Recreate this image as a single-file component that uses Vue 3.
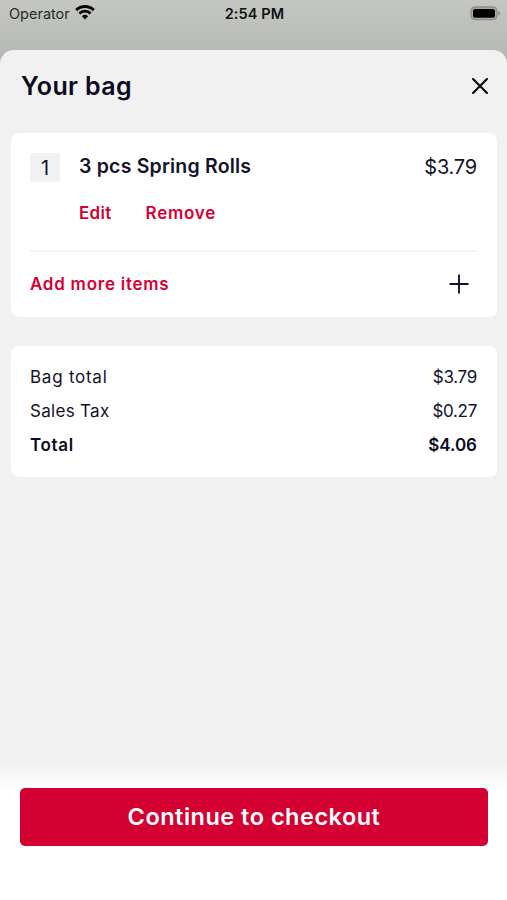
<script setup>
const totals = [
  { label: 'Bag total', amount: '$3.79', kind: 'bag' },
  { label: 'Sales Tax', amount: '$0.27', kind: 'tax' },
  { label: 'Total', amount: '$4.06', kind: 'grand' },
]
</script>

<template>
  <div class="screen">
    <header class="status">
      <div class="carrier">
        <span class="operator">Operator</span>
        <svg class="wifi" width="20" height="15" viewBox="0 0 20 15">
          <path d="M1.2 5.1a12.6 12.6 0 0 1 17.6 0" fill="none" stroke="#050505" stroke-width="2.9" />
          <path d="M4.4 8.5a7.9 7.9 0 0 1 11.2 0" fill="none" stroke="#050505" stroke-width="2.6" />
          <path d="M10 14.6 6.9 11.3a4.5 4.5 0 0 1 6.2 0z" fill="#050505" />
        </svg>
      </div>
      <span class="clock">2:54 PM</span>
      <svg class="battery" width="31" height="15" viewBox="0 0 31 15">
        <rect x="1" y="1" width="26" height="12.6" rx="4" fill="#a9aba8" stroke="#8b8d8a" stroke-width="1.3" />
        <rect x="3" y="3" width="22" height="8.8" rx="2" fill="#000" />
        <path d="M28.3 5.2c2.2.6 2.2 3.6 0 4.2z" fill="#80827f" />
      </svg>
    </header>

    <main class="sheet">
      <div class="heading">
        <h1>Your bag</h1>
        <svg class="close" width="18" height="18" viewBox="0 0 18 18">
          <path d="M2 2 16 16M16 2 2 16" fill="none" stroke="#080810" stroke-width="2.1" stroke-linecap="round" />
        </svg>
      </div>

      <section class="card items">
        <div class="item">
          <span class="qty">1</span>
          <div class="details">
            <div class="line">
              <span class="name">3 pcs Spring Rolls</span>
              <span class="price">$3.79</span>
            </div>
            <div class="actions">
              <a class="edit">Edit</a>
              <a class="remove">Remove</a>
            </div>
          </div>
        </div>
        <div class="more">
          <a class="add">Add more items</a>
          <svg class="plus" width="20" height="20" viewBox="0 0 20 20">
            <path d="M10 1.2v17.6M1.2 10h17.6" fill="none" stroke="#15132c" stroke-width="1.9" stroke-linecap="round" />
          </svg>
        </div>
      </section>

      <section class="card totals">
        <div v-for="row in totals" :key="row.kind" class="row" :class="row.kind">
          <span class="label">{{ row.label }}</span>
          <span class="amount">{{ row.amount }}</span>
        </div>
      </section>

      <footer class="footer">
        <button class="checkout">Continue to checkout</button>
      </footer>
    </main>
  </div>
</template>

<style>
body {
  margin: 0;
}
</style>

<style scoped>
* {
  box-sizing: border-box;
}
.screen {
  width: 507px;
  height: 900px;
  display: flex;
  flex-direction: column;
  overflow: hidden;
  background: linear-gradient(#c3c6c1 0, #b8bab6 50px, #b3b5b1 66px);
  color: #14122a;
  font-family: Inter, "Liberation Sans", sans-serif;
  white-space: nowrap;
}
.status {
  height: 50px;
  flex: none;
  padding: 4px 6px 0 8px;
  display: grid;
  grid-template-columns: 1fr auto 1fr;
  align-items: start;
  line-height: 20px;
  color: #111;
}
.carrier {
  display: flex;
  gap: 5px;
  padding-left: 1px;
}
.operator {
  font-size: 14.5px;
  color: #292b29;
}
.wifi {
  margin-top: 1px;
}
.clock {
  font-size: 14.5px;
  font-weight: 600;
  letter-spacing: 0.1px;
}
.battery {
  justify-self: end;
  margin-top: 2px;
}
.sheet {
  flex: 1;
  display: flex;
  flex-direction: column;
  background: #f1f1f1;
  border-radius: 14px 14px 0 0;
}
.heading {
  height: 83px;
  padding: 21px 18px 0 21px;
  display: flex;
  justify-content: space-between;
  align-items: flex-start;
}
h1 {
  margin: 0;
  font-size: 25px;
  line-height: 31px;
  font-weight: 600;
  letter-spacing: 0.4px;
  color: #0c0a22;
}
.close {
  margin-top: 6px;
}
.card {
  margin: 0 10px 0 11px;
  border-radius: 8px;
  background: #fff;
}
.items {
  height: 184px;
  padding: 0 20px 0 19px;
}
.item {
  height: 119px;
  padding-top: 20px;
  display: flex;
  gap: 19px;
  border-bottom: 2px solid #f3f3f3;
}
.qty {
  width: 30px;
  height: 29px;
  border-radius: 3px;
  background: #f1f1f1;
  font-size: 20px;
  line-height: 30px;
  text-align: center;
}
.details {
  flex: 1;
}
.line {
  display: flex;
  justify-content: space-between;
  line-height: 27px;
}
.name {
  font-size: 19.5px;
  font-weight: 600;
  letter-spacing: 0.2px;
}
.price {
  font-size: 20px;
  line-height: 28px;
  letter-spacing: -0.2px;
}
.actions {
  display: flex;
  gap: 34px;
  padding-top: 20px;
  line-height: 24px;
}
.edit,
.remove,
.add {
  font-size: 17px;
  font-weight: 600;
  letter-spacing: 0.75px;
  color: #d50032;
}
.edit {
  letter-spacing: 0.3px;
}
.more {
  height: 64px;
  padding-right: 8px;
  display: flex;
  align-items: center;
  justify-content: space-between;
}
.totals {
  height: 131px;
  margin-top: 29px;
  padding: 14px 20px 0 19px;
}
.row {
  display: flex;
  justify-content: space-between;
  font-size: 17px;
  line-height: 34px;
}
.bag .label {
  letter-spacing: 0.75px;
}
.tax .label {
  letter-spacing: 0.3px;
}
.amount {
  letter-spacing: -0.3px;
}
.grand {
  font-weight: 600;
  color: #0c0a22;
}
.grand .label {
  letter-spacing: 0.65px;
}
.grand .amount {
  letter-spacing: 0;
}
.footer {
  margin-top: auto;
  height: 137px;
  padding: 25px 19px 0 20px;
  background: linear-gradient(#f1f1f1 0, #fff 25px);
}
.checkout {
  display: block;
  width: 100%;
  height: 58px;
  padding: 0;
  border: 0;
  border-radius: 5px;
  background: #d50032;
  color: #fff;
  font-family: inherit;
  font-size: 23.5px;
  line-height: 58px;
  font-weight: 600;
  letter-spacing: 0.5px;
}
</style>
